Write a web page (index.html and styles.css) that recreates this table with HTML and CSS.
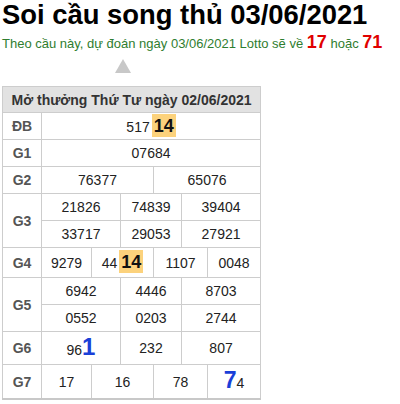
FILE: index.html
```html
<!DOCTYPE html>
<html lang="vi">
<head>
<meta charset="utf-8">
<link rel="stylesheet" href="styles.css">
</head>
<body>
<h1 class="title">Soi cầu song thủ 03/06/2021</h1>
<p class="sub">Theo cầu này, dự đoán ngày 03/06/2021 Lotto sẽ về <b class="red">17</b> hoặc <b class="red">71</b></p>
<div class="arrow"></div>
<table class="kq">
  <colgroup>
    <col class="c-lbl"><col class="c1"><col class="c2"><col class="c3"><col class="c4"><col class="c5"><col class="c6">
  </colgroup>
  <thead>
    <tr><th colspan="7" class="head">Mở thưởng Thứ Tư ngày 02/06/2021</th></tr>
  </thead>
  <tbody>
    <tr><td class="lbl">ĐB</td><td colspan="6">517<span class="hl">14</span></td></tr>
    <tr><td class="lbl">G1</td><td colspan="6">07684</td></tr>
    <tr><td class="lbl">G2</td><td colspan="3">76377</td><td colspan="3">65076</td></tr>
    <tr><td class="lbl" rowspan="2">G3</td><td colspan="2">21826</td><td colspan="2">74839</td><td colspan="2">39404</td></tr>
    <tr><td colspan="2">33717</td><td colspan="2">29053</td><td colspan="2">27921</td></tr>
    <tr class="r-g4"><td class="lbl">G4</td><td>9279</td><td colspan="2">44<span class="hl">14</span></td><td colspan="2">1107</td><td>0048</td></tr>
    <tr><td class="lbl" rowspan="2">G5</td><td colspan="2">6942</td><td colspan="2">4446</td><td colspan="2">8703</td></tr>
    <tr><td colspan="2">0552</td><td colspan="2">0203</td><td colspan="2">2744</td></tr>
    <tr class="r-g6"><td class="lbl">G6</td><td colspan="2">96<span class="blue b1">1</span></td><td colspan="2">232</td><td colspan="2">807</td></tr>
    <tr class="r-g7"><td class="lbl">G7</td><td>17</td><td colspan="2">16</td><td colspan="2">78</td><td><span class="blue b7">7</span>4</td></tr>
  </tbody>
</table>
</body>
</html>
```

FILE: styles.css
```css
html, body {
  margin: 0;
  padding: 0;
  background: #fff;
}
body {
  padding: 0 2px;
  font-family: "Liberation Sans", Arial, sans-serif;
  color: #222;
}
.title {
  margin: 0;
  font-size: 27.4px;
  line-height: 30px;
  font-weight: bold;
  color: #000;
}
.sub {
  margin: 2px 0 0 0;
  font-size: 13px;
  line-height: 20px;
  color: #2f7d2f;
}
.red {
  color: #e00000;
  font-size: 18px;
}
.arrow {
  width: 0;
  height: 0;
  margin: 5px 0 0 113px;
  border-left: 8px solid transparent;
  border-right: 8px solid transparent;
  border-bottom: 14px solid #c8c8c8;
}
.kq {
  margin-top: 13px;
  border-collapse: collapse;
  table-layout: fixed;
  width: 259px;
  border-bottom: 2px solid #c8c8c8;
}
.c-lbl { width: 39px; }
.c1 { width: 50px; }
.c2 { width: 29px; }
.c3 { width: 33px; }
.c4 { width: 28px; }
.c5 { width: 26px; }
.c6 { width: 53px; }
.kq th, .kq td {
  border: 1px solid #cdcdcd;
  text-align: center;
  padding: 0;
  height: 26px;
  font-size: 14px;
  line-height: 18px;
  white-space: nowrap;
}
.kq .head {
  background: #e2e2e2;
  font-weight: bold;
  font-size: 14px;
  color: #333;
  height: 25px;
}
.kq .lbl {
  font-weight: bold;
  font-size: 14px;
  color: #555;
}
.hl {
  background: #fcd27c;
  color: #111;
  font-weight: bold;
  font-size: 18px;
  line-height: 18px;
  padding: 2px 2px 1px;
  margin-left: 2px;
}
.kq .r-g4 td {
  height: 29px;
}
.blue {
  color: #1a3fd8;
  font-weight: bold;
  line-height: 18px;
}
.b1 { font-size: 24px; }
.b7 { font-size: 23px; }
.kq .r-g6 td {
  height: 32px;
}
.kq .r-g7 td {
  height: 33px;
}
```
